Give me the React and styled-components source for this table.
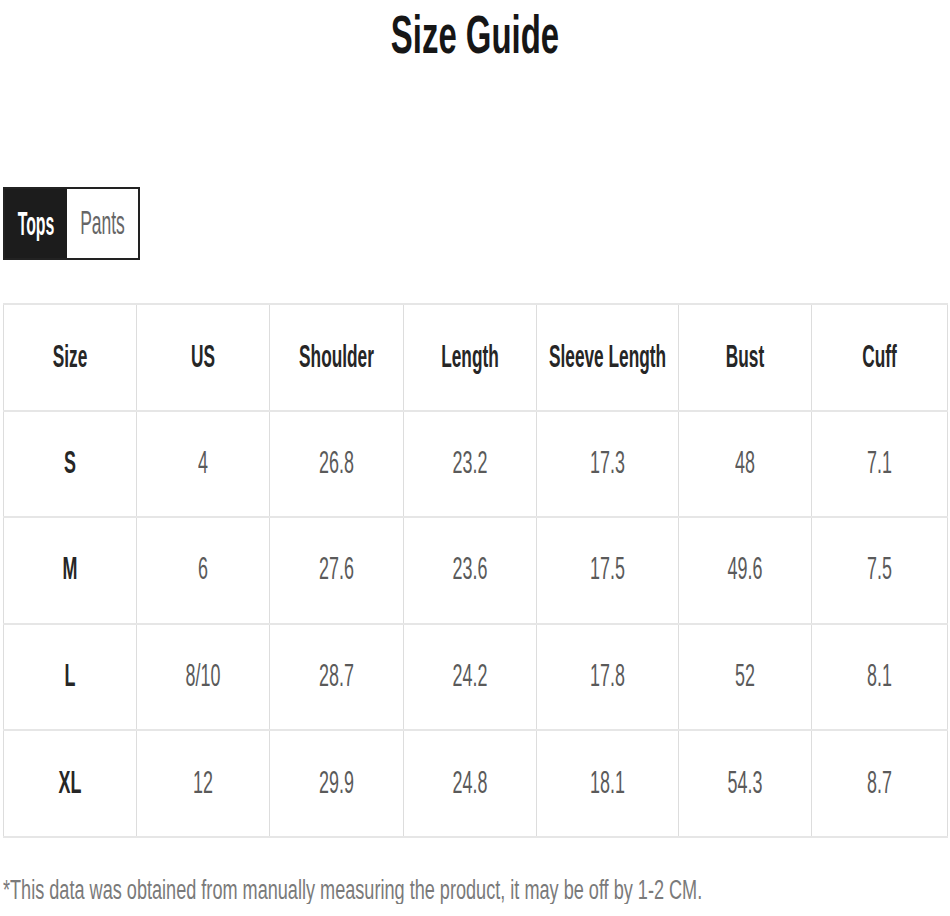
import React from "react";
import styled, { createGlobalStyle } from "styled-components";

const Global = createGlobalStyle`
  html, body { margin: 0; padding: 0; background: #fff; }
  body { font-family: "Liberation Sans", Arial, sans-serif; }
`;

const Page = styled.div`
  width: 950px;
  box-sizing: border-box;
  padding: 8px 3px 0 3px;
  display: flex;
  flex-direction: column;
  align-items: flex-start;
`;

/* Condensed text: a smaller font stretched vertically, so the layout width equals the drawn width */
const Narrow = styled.span`
  display: inline-block;
  white-space: nowrap;
  font-size: ${(p) => p.$size * p.$sx}px;
  line-height: ${(p) => p.$size * p.$sx}px;
  transform: scaleY(${(p) => 1 / p.$sx});
  transform-origin: center;
`;

const Title = styled.h1`
  margin: 0;
  align-self: stretch;
  height: 54px;
  display: flex;
  align-items: center;
  justify-content: center;
  font-weight: 700;
  color: #161616;
`;

const Tabs = styled.div`
  margin-top: 125px;
  display: flex;
  height: 73px;
  box-sizing: border-box;
  border: 2px solid #222;
`;

const Tab = styled.button`
  appearance: none;
  border: none;
  margin: 0;
  padding: 0;
  flex: none;
  width: ${(p) => p.$w}px;
  height: 100%;
  display: flex;
  align-items: center;
  justify-content: center;
  font-family: "Liberation Sans", Arial, sans-serif;
  font-weight: ${(p) => (p.$active ? 700 : 400)};
  background: ${(p) => (p.$active ? "#1c1c1c" : "#fff")};
  color: ${(p) => (p.$active ? "#fff" : "#666")};
  cursor: pointer;
`;

const Table = styled.table`
  margin-top: 43px;
  width: 944px;
  border-collapse: collapse;
  table-layout: fixed;
  border: 1px solid #dedede;
`;

const Row = styled.tr`
  height: 106.6px;
  border-top: 2px solid #e6e6e6;
  border-bottom: 2px solid #e6e6e6;
`;

const Cell = styled.td`
  padding: 0;
  text-align: center;
  vertical-align: middle;
  border-left: 1px solid #dddddd;
  border-right: 1px solid #dddddd;
  font-weight: ${(p) => (p.$strong ? 700 : 400)};
  color: ${(p) => (p.$strong ? "#262626" : "#5a5a5a")};
`;

const Note = styled.p`
  margin: 38px 0 0 0;
  height: 28px;
  display: flex;
  align-items: center;
  color: #7a7a7a;
`;

const widths = [133, 133, 134, 133, 142, 133, 136];
const headers = ["Size", "US", "Shoulder", "Length", "Sleeve Length", "Bust", "Cuff"];
const rows = [
  ["S", "4", "26.8", "23.2", "17.3", "48", "7.1"],
  ["M", "6", "27.6", "23.6", "17.5", "49.6", "7.5"],
  ["L", "8/10", "28.7", "24.2", "17.8", "52", "8.1"],
  ["XL", "12", "29.9", "24.8", "18.1", "54.3", "8.7"],
];

export default function App() {
  return (
    <>
      <Global />
      <Page>
        <Title>
          <Narrow $size={54} $sx={0.61}>Size Guide</Narrow>
        </Title>
        <Tabs>
          <Tab $active $w={62}>
            <Narrow $size={33} $sx={0.48}>Tops</Narrow>
          </Tab>
          <Tab $w={71}>
            <Narrow $size={33} $sx={0.53}>Pants</Narrow>
          </Tab>
        </Tabs>
        <Table>
          <colgroup>
            {widths.map((w, i) => (
              <col key={i} style={{ width: w }} />
            ))}
          </colgroup>
          <thead>
            <Row>
              {headers.map((h) => (
                <Cell as="th" key={h} $strong>
                  <Narrow $size={32} $sx={0.54}>{h}</Narrow>
                </Cell>
              ))}
            </Row>
          </thead>
          <tbody>
            {rows.map((r) => (
              <Row key={r[0]}>
                {r.map((v, i) => (
                  <Cell key={i} $strong={i === 0}>
                    <Narrow $size={32} $sx={0.56}>{v}</Narrow>
                  </Cell>
                ))}
              </Row>
            ))}
          </tbody>
        </Table>
        <Note>
          <Narrow $size={28} $sx={0.647}>
            *This data was obtained from manually measuring the product, it may be off by 1-2 CM.
          </Narrow>
        </Note>
      </Page>
    </>
  );
}
